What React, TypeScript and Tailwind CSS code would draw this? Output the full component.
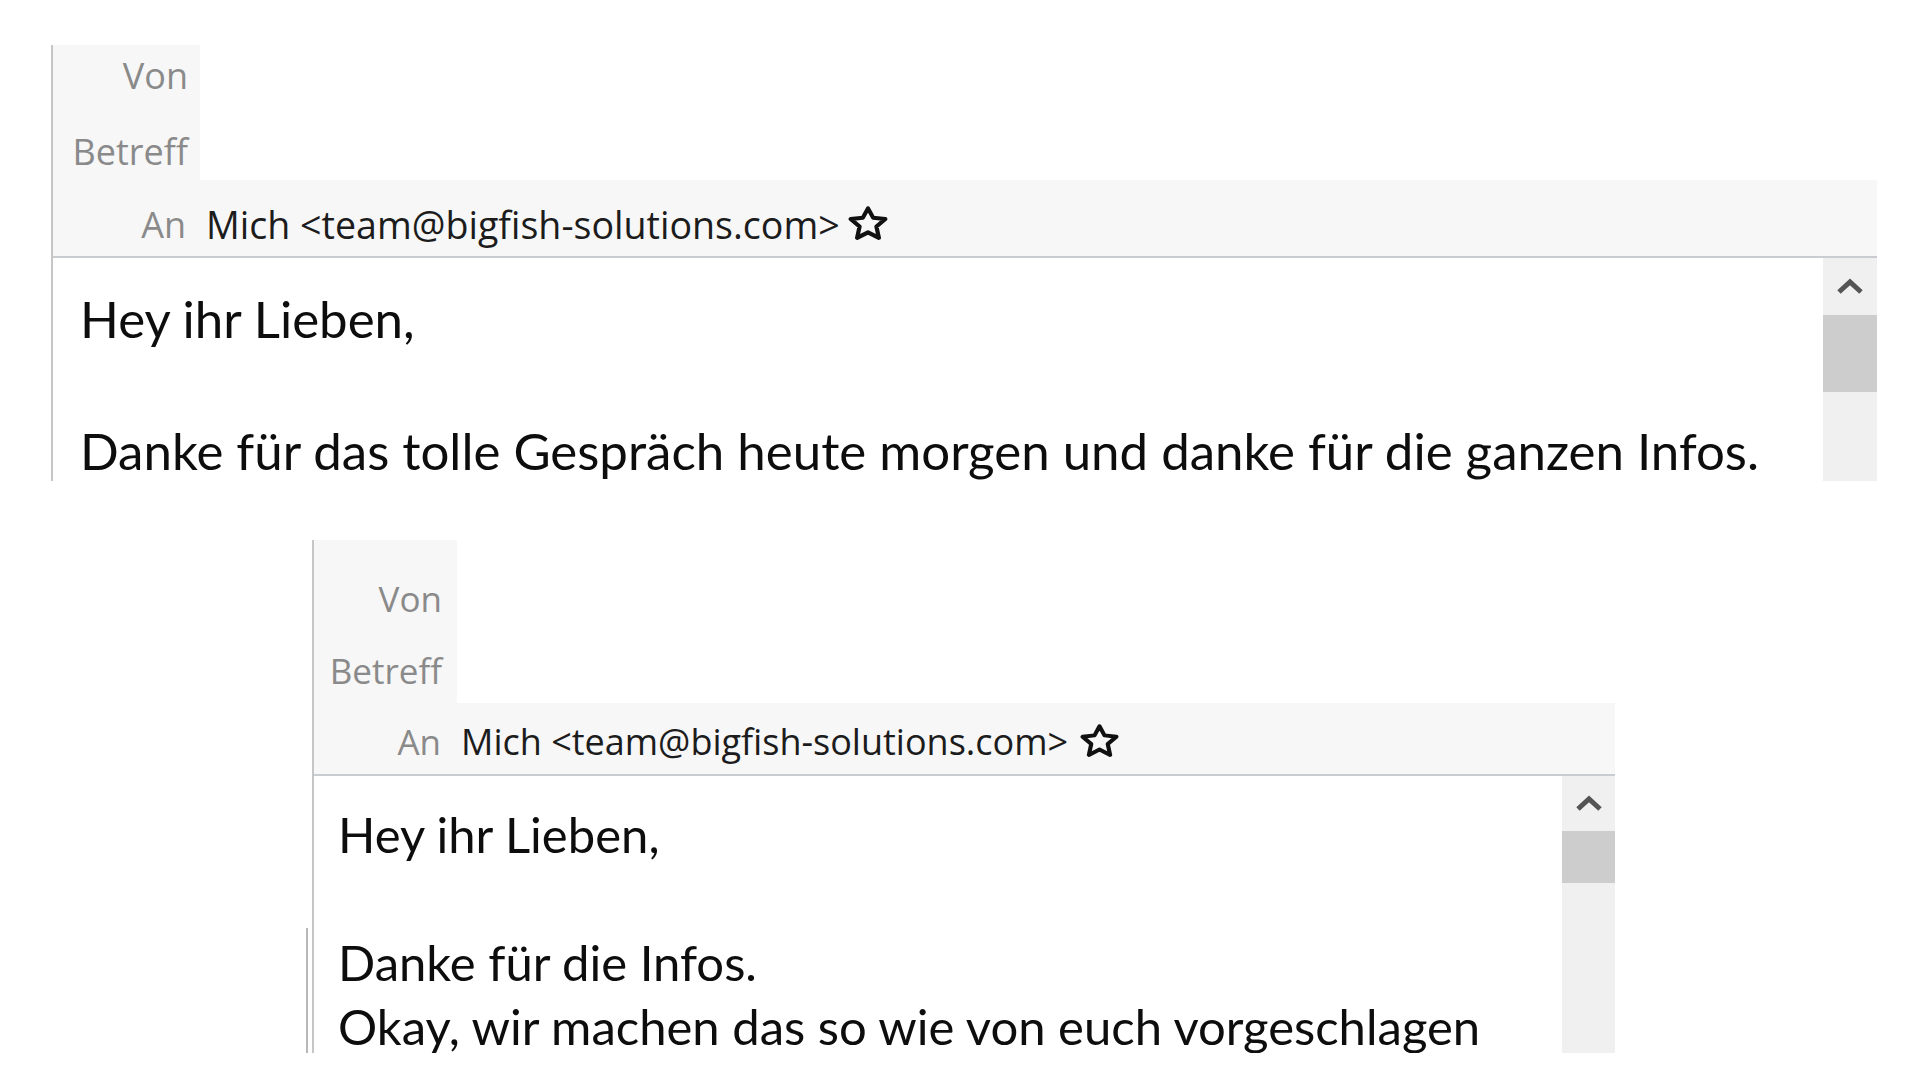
import React from "react";

function Star({ className }: { className: string }) {
  return (
    <svg viewBox="0 0 36 32" className={className} fill="none" preserveAspectRatio="none">
      <path
        d="M18 2.2 L22.6 11 L33.6 12.3 L25.6 19.4 L27.8 30 L18 24.8 L8.2 30 L10.4 19.4 L2.4 12.3 L13.4 11 Z"
        stroke="#111"
        strokeWidth="3.8"
        strokeLinejoin="round"
      />
    </svg>
  );
}

function Chevron() {
  return (
    <svg width="28" height="17" viewBox="0 0 28 17" fill="none">
      <polyline points="3,14 14,4 25,14" stroke="#555" strokeWidth="5" strokeLinejoin="miter" />
    </svg>
  );
}

function Lines({ lines }: { lines: string[] }) {
  return (
    <>
      {lines.map((l, i) => (
        <div key={i} className="whitespace-nowrap">
          {l === "" ? "\u00a0" : l}
        </div>
      ))}
    </>
  );
}

export default function App() {
  const label = "text-[#8a8a8a] font-['Open_Sans',sans-serif]";
  const value = "text-[#1c1c1c] font-['Open_Sans',sans-serif] whitespace-nowrap";
  const body = "font-['Lato',sans-serif] text-[#0d0d0d]";

  return (
    <div className="w-[1920px] h-[1080px] bg-white overflow-hidden">
      {/* first mail */}
      <div className="pt-[45px] pl-[51px] pr-[43px]">
        <div className="h-[436px] border-l-2 border-[#c6c6c6] flex flex-col overflow-hidden">
          <div className="flex h-[135px] shrink-0">
            <div className={`w-[147px] bg-[#f7f7f7] flex flex-col items-end pr-[12px] pt-[11px] text-[36px] leading-[40px] ${label}`}>
              <span>Von</span>
              <span className="mt-[36px]">Betreff</span>
            </div>
          </div>
          <div className="h-[78px] shrink-0 bg-[#f7f7f7] border-b-2 border-[#c9cdd1] flex items-start pt-[25px]">
            <div className={`w-[147px] text-right pr-[14px] text-[36px] leading-[40px] ${label}`}>An</div>
            <div className={`ml-[6px] text-[37.6px] leading-[40px] ${value}`}>Mich &lt;team@bigfish-solutions.com&gt;</div>
            <Star className="ml-[8px] mt-[1px] w-[40px] h-[34px]" />
          </div>
          <div className="flex flex-1 min-h-0">
            <div className={`flex-1 pl-[27px] pt-[28px] text-[51px] leading-[66px] ${body}`}>
              <Lines lines={["Hey ihr Lieben,", "", "Danke für das tolle Gespräch heute morgen und danke für die ganzen Infos."]} />
            </div>
            <div className="w-[54px] bg-[#f0f0f0] flex flex-col">
              <div className="h-[57px] flex items-center justify-center">
                <Chevron />
              </div>
              <div className="h-[77px] bg-[#cdcdcd]" />
            </div>
          </div>
        </div>
      </div>

      {/* second mail */}
      <div className="pt-[59px] pl-[306px] pr-[305px] flex">
        <div className="w-[2px] h-[513px] flex flex-col justify-end">
          <div className="h-[125px] bg-[#b8b8b8]" />
        </div>
        <div className="w-[4px]" />
        <div className="flex-1 h-[513px] border-l-2 border-[#c6c6c6] flex flex-col overflow-hidden">
          <div className="flex h-[163px] shrink-0">
            <div className={`w-[143px] bg-[#f7f7f7] flex flex-col items-end pr-[15px] pt-[39px] text-[35px] leading-[40px] ${label}`}>
              <span>Von</span>
              <span className="mt-[32px]">Betreff</span>
            </div>
          </div>
          <div className="h-[73px] shrink-0 bg-[#f7f7f7] border-b-2 border-[#c9cdd1] flex items-start pt-[19px]">
            <div className={`w-[143px] text-right pr-[16px] text-[35px] leading-[40px] ${label}`}>An</div>
            <div className={`ml-[4px] text-[36px] leading-[40px] ${value}`}>Mich &lt;team@bigfish-solutions.com&gt;</div>
            <Star className="ml-[12px] mt-[2px] w-[39px] h-[33px]" />
          </div>
          <div className="flex flex-1 min-h-0">
            <div className={`flex-1 pl-[24px] pt-[26px] text-[49px] leading-[64px] ${body}`}>
              <Lines lines={["Hey ihr Lieben,", "", "Danke für die Infos.", "Okay, wir machen das so wie von euch vorgeschlagen"]} />
            </div>
            <div className="w-[53px] bg-[#f0f0f0] flex flex-col">
              <div className="h-[55px] flex items-center justify-center">
                <Chevron />
              </div>
              <div className="h-[52px] bg-[#cdcdcd]" />
            </div>
          </div>
        </div>
      </div>
    </div>
  );
}
